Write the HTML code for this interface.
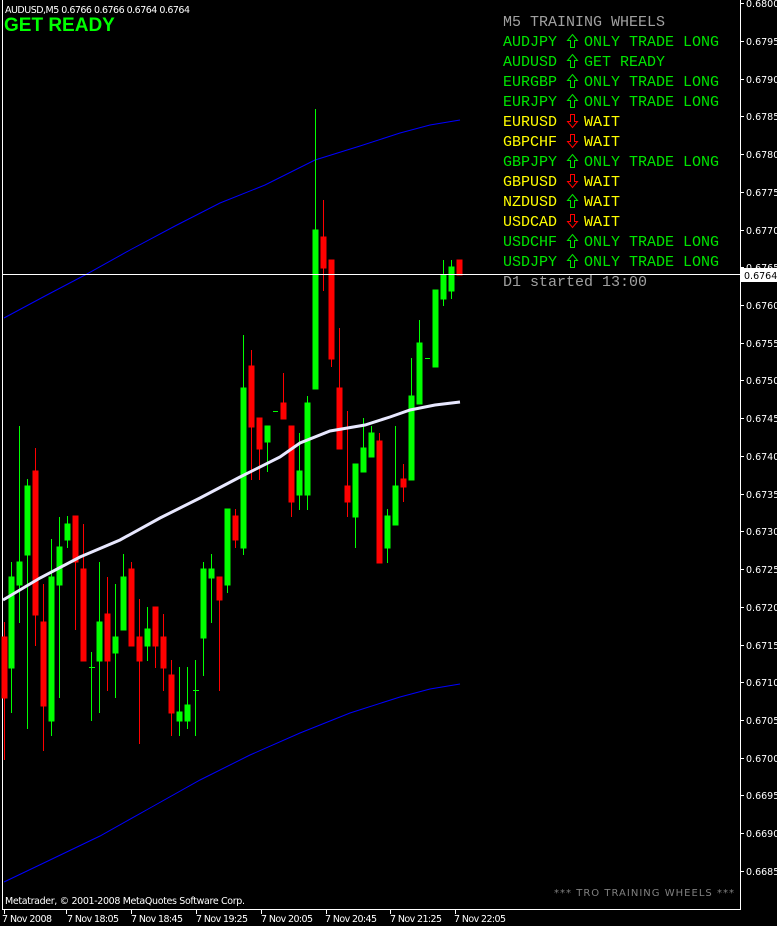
<!DOCTYPE html>
<html><head><meta charset="utf-8"><style>
html,body{margin:0;padding:0;background:#000;width:777px;height:926px;overflow:hidden}
svg{display:block}
.p text{font-family:"Liberation Mono",monospace;font-size:15px;white-space:pre}
.a{font-family:"DejaVu Sans","Liberation Sans",sans-serif;font-size:9.5px;fill:#fff}
</style></head><body>
<svg width="777" height="926" viewBox="0 0 777 926" xmlns="http://www.w3.org/2000/svg" shape-rendering="crispEdges">
<defs>
<polygon id="up" points="5,0 10,6 7,6 7,13 3,13 3,6 0,6" fill="none" stroke-width="1"/>
<polygon id="dn" points="5,13 10,7 7,7 7,0 3,0 3,7 0,7" fill="none" stroke-width="1"/>
</defs>
<rect width="777" height="926" fill="#000"/>
<line x1="2.5" y1="0" x2="2.5" y2="909" stroke="#fff"/>
<line x1="740.5" y1="0" x2="740.5" y2="910" stroke="#fff"/>
<line x1="2" y1="909.5" x2="741" y2="909.5" stroke="#fff"/>
<polyline fill="none" stroke="#0000ff" stroke-width="1" shape-rendering="auto" points="4,318 45,296 85,275 130,250 175,226 220,203 265,185 315,160 360,146 400,133 430,125 460,120"/>
<polyline fill="none" stroke="#0000ff" stroke-width="1" shape-rendering="auto" points="4,882 50,860 100,836 150,808 200,780 250,755 300,733 350,713 400,697 430,689 460,684"/>
<g stroke-width="1">
<g stroke="#ff0000" fill="#ff0000">
<line x1="4.5" y1="622" x2="4.5" y2="760"/><rect x="2" y="637" width="5" height="61"/>
<line x1="35.5" y1="448" x2="35.5" y2="646"/><rect x="33" y="471" width="5" height="144"/>
<line x1="43.5" y1="584" x2="43.5" y2="751"/><rect x="41" y="622" width="5" height="84"/>
<line x1="75.5" y1="516" x2="75.5" y2="630"/><rect x="73" y="516" width="5" height="46"/>
<line x1="83.5" y1="524" x2="83.5" y2="661"/><rect x="81" y="569" width="5" height="92"/>
<line x1="107.5" y1="577" x2="107.5" y2="691"/><rect x="105" y="614" width="5" height="47"/>
<line x1="131.5" y1="562" x2="131.5" y2="646"/><rect x="129" y="569" width="5" height="77"/>
<line x1="139.5" y1="599" x2="139.5" y2="744"/><rect x="137" y="637" width="5" height="24"/>
<line x1="155.5" y1="607" x2="155.5" y2="668"/><rect x="153" y="607" width="5" height="39"/>
<line x1="163.5" y1="614" x2="163.5" y2="691"/><rect x="161" y="637" width="5" height="31"/>
<line x1="171.5" y1="660" x2="171.5" y2="736"/><rect x="169" y="675" width="5" height="38"/>
<line x1="219.5" y1="577" x2="219.5" y2="691"/><rect x="217" y="577" width="5" height="23"/>
<line x1="235.5" y1="509" x2="235.5" y2="548"/><rect x="233" y="516" width="5" height="24"/>
<line x1="251.5" y1="350" x2="251.5" y2="480"/><rect x="249" y="366" width="5" height="61"/>
<line x1="259.5" y1="418" x2="259.5" y2="480"/><rect x="257" y="418" width="5" height="31"/>
<line x1="283.5" y1="373" x2="283.5" y2="419"/><rect x="281" y="403" width="5" height="16"/>
<line x1="291.5" y1="426" x2="291.5" y2="517"/><rect x="289" y="426" width="5" height="76"/>
<line x1="323.5" y1="200" x2="323.5" y2="291"/><rect x="321" y="237" width="5" height="31"/>
<line x1="331.5" y1="260" x2="331.5" y2="367"/><rect x="329" y="260" width="5" height="99"/>
<line x1="339.5" y1="328" x2="339.5" y2="449"/><rect x="337" y="388" width="5" height="61"/>
<line x1="347.5" y1="411" x2="347.5" y2="517"/><rect x="345" y="486" width="5" height="16"/>
<line x1="379.5" y1="433" x2="379.5" y2="563"/><rect x="377" y="441" width="5" height="122"/>
<line x1="403.5" y1="464" x2="403.5" y2="502"/><rect x="401" y="479" width="5" height="8"/>
<rect x="457" y="260" width="5" height="15"/>
</g>
<g stroke="#00ff00" fill="#00ff00">
<line x1="11.5" y1="562" x2="11.5" y2="713"/><rect x="9" y="577" width="5" height="91"/>
<line x1="19.5" y1="426" x2="19.5" y2="623"/><rect x="17" y="562" width="5" height="23"/>
<line x1="27.5" y1="479" x2="27.5" y2="729"/><rect x="25" y="486" width="5" height="69"/>
<line x1="51.5" y1="539" x2="51.5" y2="736"/><rect x="49" y="577" width="5" height="144"/>
<line x1="59.5" y1="517" x2="59.5" y2="698"/><rect x="57" y="547" width="5" height="38"/>
<line x1="67.5" y1="516" x2="67.5" y2="548"/><rect x="65" y="524" width="5" height="16"/>
<line x1="91.5" y1="652" x2="91.5" y2="721"/><line x1="89" y1="667.5" x2="95" y2="667.5"/>
<line x1="99.5" y1="562" x2="99.5" y2="713"/><rect x="97" y="622" width="5" height="39"/>
<line x1="115.5" y1="584" x2="115.5" y2="698"/><rect x="113" y="637" width="5" height="16"/>
<line x1="123.5" y1="554" x2="123.5" y2="630"/><rect x="121" y="577" width="5" height="53"/>
<line x1="147.5" y1="607" x2="147.5" y2="661"/><rect x="145" y="629" width="5" height="17"/>
<line x1="179.5" y1="667" x2="179.5" y2="736"/><rect x="177" y="712" width="5" height="9"/>
<line x1="187.5" y1="667" x2="187.5" y2="729"/><rect x="185" y="705" width="5" height="16"/>
<line x1="195.5" y1="660" x2="195.5" y2="736"/><line x1="193" y1="690.5" x2="199" y2="690.5"/>
<line x1="203.5" y1="562" x2="203.5" y2="676"/><rect x="201" y="569" width="5" height="69"/>
<line x1="211.5" y1="554" x2="211.5" y2="623"/><rect x="209" y="569" width="5" height="9"/>
<line x1="227.5" y1="509" x2="227.5" y2="593"/><rect x="225" y="509" width="5" height="76"/>
<line x1="243.5" y1="335" x2="243.5" y2="555"/><rect x="241" y="388" width="5" height="160"/>
<line x1="267.5" y1="426" x2="267.5" y2="472"/><rect x="265" y="426" width="5" height="16"/>
<line x1="273" y1="411.5" x2="278" y2="411.5"/>
<line x1="299.5" y1="433" x2="299.5" y2="510"/><rect x="297" y="471" width="5" height="24"/>
<line x1="307.5" y1="396" x2="307.5" y2="510"/><rect x="305" y="403" width="5" height="92"/>
<line x1="315.5" y1="109" x2="315.5" y2="389"/><rect x="313" y="230" width="5" height="159"/>
<line x1="355.5" y1="464" x2="355.5" y2="548"/><rect x="353" y="464" width="5" height="53"/>
<line x1="363.5" y1="418" x2="363.5" y2="472"/><rect x="361" y="448" width="5" height="24"/>
<line x1="371.5" y1="426" x2="371.5" y2="457"/><rect x="369" y="433" width="5" height="24"/>
<line x1="387.5" y1="509" x2="387.5" y2="563"/><rect x="385" y="516" width="5" height="32"/>
<line x1="395.5" y1="426" x2="395.5" y2="525"/><rect x="393" y="486" width="5" height="39"/>
<line x1="411.5" y1="358" x2="411.5" y2="480"/><rect x="409" y="396" width="5" height="84"/>
<line x1="419.5" y1="320" x2="419.5" y2="404"/><rect x="417" y="343" width="5" height="61"/>
<line x1="425" y1="358.5" x2="430" y2="358.5"/>
<rect x="433" y="290" width="5" height="77"/>
<line x1="443.5" y1="260" x2="443.5" y2="306"/><rect x="441" y="275" width="5" height="24"/>
<line x1="451.5" y1="260" x2="451.5" y2="299"/><rect x="449" y="267" width="5" height="24"/>
</g>
</g>
<polyline fill="none" stroke="#e8e8ff" stroke-width="3" shape-rendering="auto" points="3,600 40,578 80,557 120,540 160,518 200,498 240,477 280,457 300,443 330,431 365,425 390,417 410,410 435,405 460,402"/>
<line x1="3" y1="274.5" x2="740" y2="274.5" stroke="#fff"/>
<g class="a">
<g stroke="#fff">
<line x1="741" y1="3.5" x2="744" y2="3.5"/><line x1="741" y1="41.5" x2="744" y2="41.5"/><line x1="741" y1="79.5" x2="744" y2="79.5"/><line x1="741" y1="116.5" x2="744" y2="116.5"/><line x1="741" y1="154.5" x2="744" y2="154.5"/><line x1="741" y1="192.5" x2="744" y2="192.5"/><line x1="741" y1="230.5" x2="744" y2="230.5"/><line x1="741" y1="267.5" x2="744" y2="267.5"/><line x1="741" y1="305.5" x2="744" y2="305.5"/><line x1="741" y1="343.5" x2="744" y2="343.5"/><line x1="741" y1="380.5" x2="744" y2="380.5"/><line x1="741" y1="418.5" x2="744" y2="418.5"/><line x1="741" y1="456.5" x2="744" y2="456.5"/><line x1="741" y1="494.5" x2="744" y2="494.5"/><line x1="741" y1="531.5" x2="744" y2="531.5"/><line x1="741" y1="569.5" x2="744" y2="569.5"/><line x1="741" y1="607.5" x2="744" y2="607.5"/><line x1="741" y1="645.5" x2="744" y2="645.5"/><line x1="741" y1="682.5" x2="744" y2="682.5"/><line x1="741" y1="720.5" x2="744" y2="720.5"/><line x1="741" y1="758.5" x2="744" y2="758.5"/><line x1="741" y1="795.5" x2="744" y2="795.5"/><line x1="741" y1="833.5" x2="744" y2="833.5"/><line x1="741" y1="871.5" x2="744" y2="871.5"/>
</g>
<text x="746" y="7">0.6800</text><text x="746" y="45">0.6795</text><text x="746" y="83">0.6790</text><text x="746" y="120">0.6785</text><text x="746" y="158">0.6780</text><text x="746" y="196">0.6775</text><text x="746" y="234">0.6770</text><text x="746" y="271">0.6765</text><text x="746" y="309">0.6760</text><text x="746" y="347">0.6755</text><text x="746" y="384">0.6750</text><text x="746" y="422">0.6745</text><text x="746" y="460">0.6740</text><text x="746" y="498">0.6735</text><text x="746" y="535">0.6730</text><text x="746" y="573">0.6725</text><text x="746" y="611">0.6720</text><text x="746" y="649">0.6715</text><text x="746" y="686">0.6710</text><text x="746" y="724">0.6705</text><text x="746" y="762">0.6700</text><text x="746" y="799">0.6695</text><text x="746" y="837">0.6690</text><text x="746" y="875">0.6685</text>
<rect x="741" y="268" width="36" height="14" fill="#fff"/>
<text x="744" y="279" style="fill:#000">0.6764</text>
<g stroke="#fff"><line x1="4.5" y1="910" x2="4.5" y2="914"/><line x1="66.5" y1="910" x2="66.5" y2="914"/><line x1="131.5" y1="910" x2="131.5" y2="914"/><line x1="196.5" y1="910" x2="196.5" y2="914"/><line x1="261.5" y1="910" x2="261.5" y2="914"/><line x1="326.5" y1="910" x2="326.5" y2="914"/><line x1="390.5" y1="910" x2="390.5" y2="914"/><line x1="455.5" y1="910" x2="455.5" y2="914"/></g>
<text x="2" y="922" textLength="50">7 Nov 2008</text><text x="67" y="922" textLength="52">7 Nov 18:05</text><text x="131" y="922" textLength="52">7 Nov 18:45</text><text x="196" y="922" textLength="52">7 Nov 19:25</text><text x="261" y="922" textLength="52">7 Nov 20:05</text><text x="325" y="922" textLength="52">7 Nov 20:45</text><text x="390" y="922" textLength="52">7 Nov 21:25</text><text x="454" y="922" textLength="52">7 Nov 22:05</text>
<text x="5" y="904" textLength="240">Metatrader, © 2001-2008 MetaQuotes Software Corp.</text>
<text x="5" y="13" textLength="185">AUDUSD,M5  0.6766 0.6766 0.6764 0.6764</text>
</g>
<text x="554" y="896" font-family="DejaVu Sans,Liberation Sans,sans-serif" font-size="10" fill="#808080" textLength="180">*** TRO TRAINING WHEELS ***</text>
<text x="4" y="31" font-family="Liberation Sans,sans-serif" font-weight="bold" font-size="19" fill="#00ff00">GET READY</text>
<g class="p">
<text x="503" y="26" fill="#a0a0a0">M5 TRAINING WHEELS</text>
<text x="503" y="46" fill="#00e600">AUDJPY</text><text x="584" y="46" fill="#00e600">ONLY TRADE LONG</text>
<text x="503" y="66" fill="#00e600">AUDUSD</text><text x="584" y="66" fill="#00e600">GET READY</text>
<text x="503" y="86" fill="#00e600">EURGBP</text><text x="584" y="86" fill="#00e600">ONLY TRADE LONG</text>
<text x="503" y="106" fill="#00e600">EURJPY</text><text x="584" y="106" fill="#00e600">ONLY TRADE LONG</text>
<text x="503" y="126" fill="#ffff00">EURUSD</text><text x="584" y="126" fill="#ffff00">WAIT</text>
<text x="503" y="146" fill="#ffff00">GBPCHF</text><text x="584" y="146" fill="#ffff00">WAIT</text>
<text x="503" y="166" fill="#00e600">GBPJPY</text><text x="584" y="166" fill="#00e600">ONLY TRADE LONG</text>
<text x="503" y="186" fill="#ffff00">GBPUSD</text><text x="584" y="186" fill="#ffff00">WAIT</text>
<text x="503" y="206" fill="#ffff00">NZDUSD</text><text x="584" y="206" fill="#ffff00">WAIT</text>
<text x="503" y="226" fill="#ffff00">USDCAD</text><text x="584" y="226" fill="#ffff00">WAIT</text>
<text x="503" y="246" fill="#00e600">USDCHF</text><text x="584" y="246" fill="#00e600">ONLY TRADE LONG</text>
<text x="503" y="266" fill="#00e600">USDJPY</text><text x="584" y="266" fill="#00e600">ONLY TRADE LONG</text>
<text x="503" y="286" fill="#a0a0a0">D1 started 13:00</text>
</g>
<g shape-rendering="auto">
<use href="#up" x="567.5" y="34.5" stroke="#00e600"/>
<use href="#up" x="567.5" y="54.5" stroke="#00e600"/>
<use href="#up" x="567.5" y="74.5" stroke="#00e600"/>
<use href="#up" x="567.5" y="94.5" stroke="#00e600"/>
<use href="#dn" x="567.5" y="114.5" stroke="#ff0000"/>
<use href="#dn" x="567.5" y="134.5" stroke="#ff0000"/>
<use href="#up" x="567.5" y="154.5" stroke="#00e600"/>
<use href="#dn" x="567.5" y="174.5" stroke="#ff0000"/>
<use href="#up" x="567.5" y="194.5" stroke="#00e600"/>
<use href="#dn" x="567.5" y="214.5" stroke="#ff0000"/>
<use href="#up" x="567.5" y="234.5" stroke="#00e600"/>
<use href="#up" x="567.5" y="254.5" stroke="#00e600"/>
</g>
</svg>
</body></html>
